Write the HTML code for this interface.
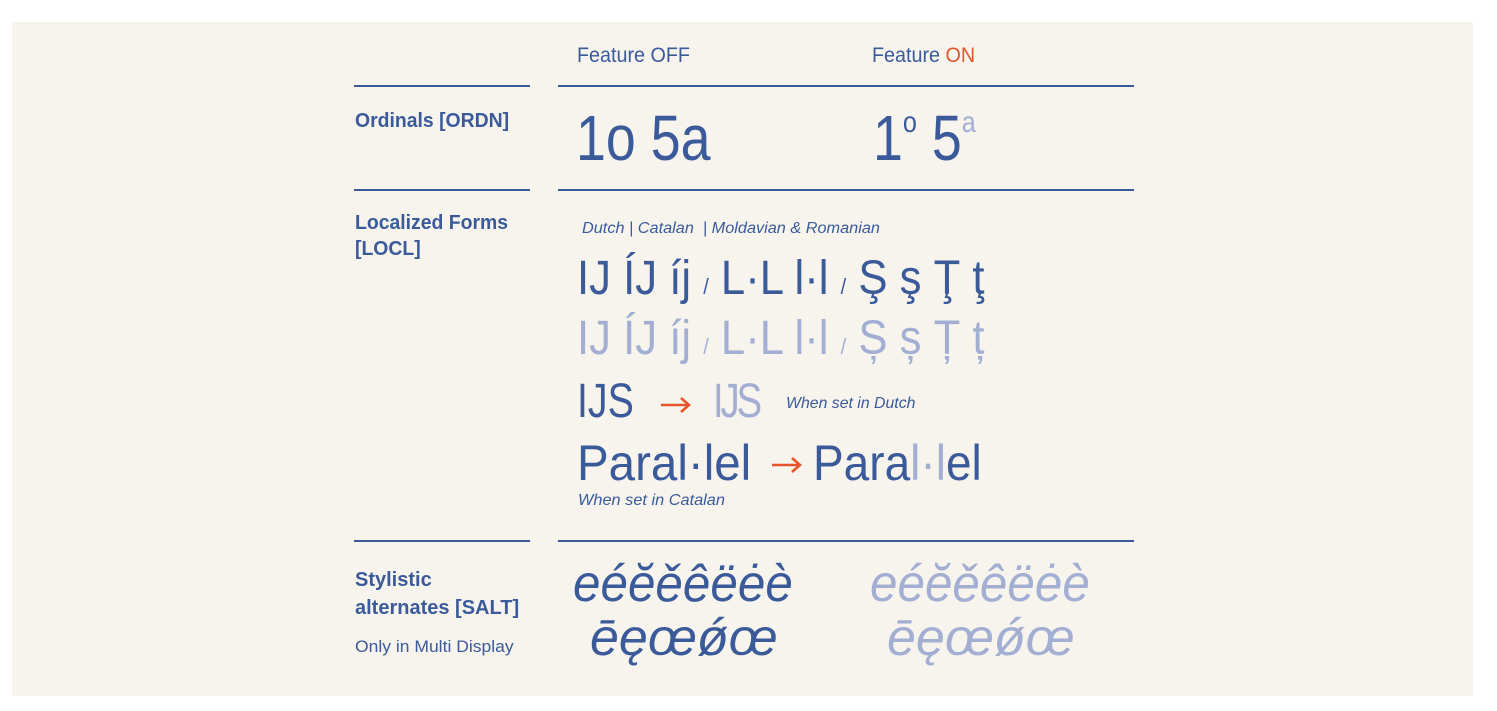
<!DOCTYPE html>
<html><head><meta charset="utf-8"><style>
html,body{margin:0;padding:0;background:#fff;width:1497px;height:711px;overflow:hidden}
#p{position:absolute;left:12px;top:22px;width:1461px;height:674px;background:#f7f4ee}
.t{position:absolute;font-family:"Liberation Sans","DejaVu Sans",sans-serif;color:#3a5a9a;white-space:nowrap;transform-origin:0 0;line-height:1}
.l{position:absolute;height:1.5px;background:#3a5a9a}
.lt{color:#a3aed3}
.or{color:#e5572a}
svg{position:absolute}
</style></head><body>
<div id="p"></div>
<div class="t" style="left:577px;top:45px;font-size:21px;transform:scaleX(.94)">Feature OFF</div>
<div class="t" style="left:872px;top:45px;font-size:21px;transform:scaleX(.94)">Feature <span class="or">ON</span></div>
<div class="l" style="left:354px;top:85px;width:176px"></div>
<div class="l" style="left:558px;top:85px;width:576px"></div>
<div class="l" style="left:354px;top:189px;width:176px"></div>
<div class="l" style="left:558px;top:189px;width:576px"></div>
<div class="l" style="left:354px;top:540px;width:176px"></div>
<div class="l" style="left:558px;top:540px;width:576px"></div>

<div class="t" style="left:355px;top:111px;font-size:20px;font-weight:bold;transform:scaleX(.97)">Ordinals [ORDN]</div>
<div class="t" style="left:576px;top:106px;font-size:64px;transform:scaleX(.84)">1o 5a</div>
<div class="t" style="left:873px;top:106px;font-size:64px;transform:scaleX(.84)">1<span style="font-size:30px;vertical-align:28px">o</span> 5<span class="lt" style="font-size:30px;vertical-align:28px">a</span></div>

<div class="t" style="left:355px;top:213px;font-size:20px;font-weight:bold;transform:scaleX(.97)">Localized Forms</div>
<div class="t" style="left:355px;top:239px;font-size:20px;font-weight:bold;transform:scaleX(.97)">[LOCL]</div>
<div class="t" style="left:582px;top:221px;font-size:15.5px;font-style:italic;transform:scaleX(1.05)">Dutch | Catalan&nbsp; | Moldavian &amp; Romanian</div>
<div class="t" style="left:577px;top:255px;font-size:48px;transform:scaleX(.91)">IJ ÍJ íj <span style="font-size:22px">/</span> L·L l·l <span style="font-size:22px">/</span> Ş ş Ţ ţ</div>
<div class="t lt" style="left:577px;top:315px;font-size:48px;transform:scaleX(.91)">IJ ÍJ íj <span style="font-size:22px">/</span> L·L l·l <span style="font-size:22px">/</span> Ș ș Ț ț</div>
<div class="t" style="left:577px;top:378px;font-size:48px;transform:scaleX(.82)">IJS</div>
<svg style="left:660px;top:396px" width="32" height="18" viewBox="0 0 32 18"><path d="M1 9H29M21 2L29 9L21 16" fill="none" stroke="#e5572a" stroke-width="2.6"/></svg>
<div class="t lt" style="left:713px;top:378px;font-size:48px;letter-spacing:-4px;transform:scaleX(.8)">IJS</div>
<div class="t" style="left:786px;top:396px;font-size:16px;font-style:italic;transform:scaleX(.99)">When set in Dutch</div>
<div class="t" style="left:577px;top:438px;font-size:50px;transform:scaleX(.95)">Paral·lel</div>
<svg style="left:771px;top:456px" width="32" height="18" viewBox="0 0 32 18"><path d="M1 9H29M21 2L29 9L21 16" fill="none" stroke="#e5572a" stroke-width="2.6"/></svg>
<div class="t" style="left:813px;top:438px;font-size:50px;transform:scaleX(.92)">Para<span class="lt">l·l</span>el</div>
<div class="t" style="left:578px;top:493px;font-size:16px;font-style:italic;transform:scaleX(1.02)">When set in Catalan</div>

<div class="t" style="left:355px;top:570px;font-size:20px;font-weight:bold;transform:scaleX(1)">Stylistic</div>
<div class="t" style="left:355px;top:598px;font-size:20px;font-weight:bold;transform:scaleX(1)">alternates [SALT]</div>
<div class="t" style="left:355px;top:638px;font-size:17px;transform:scaleX(1.03)">Only in Multi Display</div>
<div class="t" style="left:573px;top:558px;font-size:52px;font-style:italic;transform:scaleX(.95)">eéĕěêëėè</div>
<div class="t" style="left:590px;top:612px;font-size:52px;font-style:italic;transform:scaleX(1)">ēęœǿœ</div>
<div class="t lt" style="left:870px;top:558px;font-size:52px;font-style:italic;transform:scaleX(.95)">eéĕěêëėè</div>
<div class="t lt" style="left:887px;top:612px;font-size:52px;font-style:italic;transform:scaleX(1)">ēęœǿœ</div>
</body></html>
